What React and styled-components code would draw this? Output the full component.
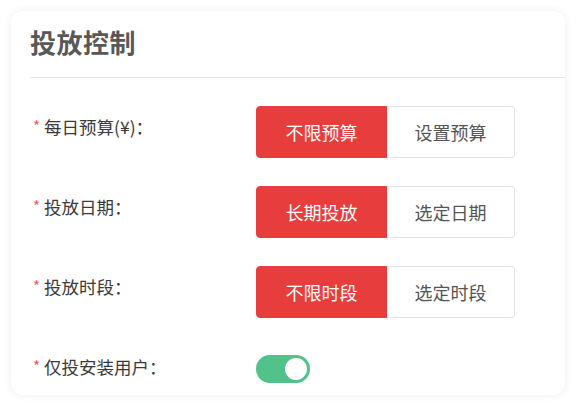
import React, { useState } from "react";
import styled, { createGlobalStyle } from "styled-components";

const Global = createGlobalStyle`
  html, body { margin: 0; padding: 0; background: #ffffff; }
  body { font-family: "Noto Sans CJK SC", "Noto Sans", sans-serif; }
  * { box-sizing: border-box; }
`;

const Page = styled.div`
  padding: 11px 12px 12px 11px;
`;

const Card = styled.section`
  width: 554px;
  height: 384px;
  background: #fff;
  border-radius: 12px;
  box-shadow: 0 0 10px rgba(0, 0, 0, 0.07);
  overflow: hidden;
`;

const Header = styled.header`
  margin-left: 19px;
  height: 67px;
  border-bottom: 1px solid #e4e4e4;
  display: flex;
  align-items: center;
  padding-bottom: 6px;
`;

const Title = styled.h2`
  margin: 0;
  font-size: 26px;
  font-weight: 700;
  color: #585858;
  letter-spacing: 0.5px;
`;

const Form = styled.div`
  display: flex;
  flex-direction: column;
  gap: 28px;
  padding: 28px 0 0 22px;
`;

const Row = styled.div`
  display: flex;
  align-items: flex-start;
`;

const Label = styled.div`
  width: 223px;
  line-height: 44px;
  font-size: 17.5px;
  color: #3a3a3a;
  display: flex;
  align-items: center;
  transform: translateY(-1px);
`;

const Star = styled.span`
  color: #ef5a5a;
  font-size: 15px;
  margin-right: 4px;
  transform: translateY(-1px);
`;

const Segmented = styled.div`
  display: flex;
`;

const Seg = styled.button`
  width: ${(p) => (p.$first ? 131 : 128)}px;
  height: 52px;
  font-family: inherit;
  font-size: 18px;
  cursor: pointer;
  border: 1px solid ${(p) => (p.$active ? "#e83d3d" : "#dfe3ea")};
  background: ${(p) => (p.$active ? "#e83d3d" : "#fff")};
  color: ${(p) => (p.$active ? "#fff" : "#555")};
  border-radius: ${(p) => (p.$first ? "4px 0 0 4px" : "0 4px 4px 0")};
  ${(p) => (p.$first ? "" : "border-left: none;")}
  padding: 0;
`;

const Toggle = styled.button`
  margin-top: 9px;
  width: 54px;
  height: 28px;
  border-radius: 14px;
  border: none;
  padding: 3px;
  background: ${(p) => (p.$on ? "#50c28a" : "#ccc")};
  display: flex;
  justify-content: ${(p) => (p.$on ? "flex-end" : "flex-start")};
  cursor: pointer;
`;

const Knob = styled.span`
  width: 22px;
  height: 22px;
  border-radius: 50%;
  background: #fff;
`;

const rows = [
  { label: "每日预算(¥)：", a: "不限预算", b: "设置预算" },
  { label: "投放日期：", a: "长期投放", b: "选定日期" },
  { label: "投放时段：", a: "不限时段", b: "选定时段" },
];

export default function App() {
  const [sel, setSel] = useState([0, 0, 0]);
  const [on, setOn] = useState(true);
  return (
    <>
      <Global />
      <Page>
        <Card>
          <Header>
            <Title>投放控制</Title>
          </Header>
          <Form>
            {rows.map((r, i) => (
              <Row key={i}>
                <Label>
                  <Star>*</Star>
                  {r.label}
                </Label>
                <Segmented>
                  <Seg
                    $first
                    $active={sel[i] === 0}
                    onClick={() => setSel(sel.map((v, j) => (j === i ? 0 : v)))}
                  >
                    {r.a}
                  </Seg>
                  <Seg
                    $active={sel[i] === 1}
                    onClick={() => setSel(sel.map((v, j) => (j === i ? 1 : v)))}
                  >
                    {r.b}
                  </Seg>
                </Segmented>
              </Row>
            ))}
            <Row>
              <Label>
                <Star>*</Star>
                仅投安装用户：
              </Label>
              <Toggle $on={on} onClick={() => setOn(!on)}>
                <Knob />
              </Toggle>
            </Row>
          </Form>
        </Card>
      </Page>
    </>
  );
}
